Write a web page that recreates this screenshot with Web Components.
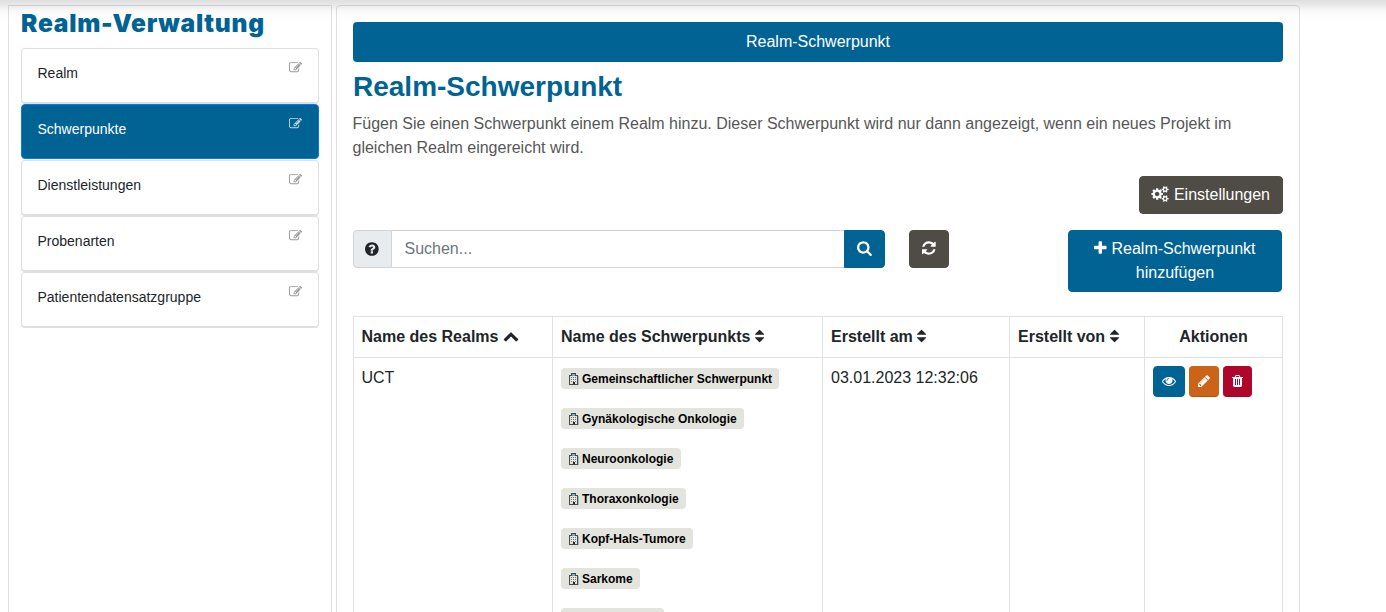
<!DOCTYPE html>
<html lang="de">
<head>
<meta charset="utf-8">
<title>Realm-Verwaltung</title>
<style>
html,body{margin:0;height:100%;overflow:hidden;background:#fff}
body{font:16px/24px "Liberation Sans",Arial,sans-serif;color:#212529}
</style>
</head>
<body>
<realm-app></realm-app>
<script>
const ICONS = {
  search:[64,1664,"M1216 832q0-185-131.5-316.5t-316.5-131.5-316.5 131.5-131.5 316.5 131.5 316.5 316.5 131.5 316.5-131.5 131.5-316.5zm512 832q0 52-38 90t-90 38q-54 0-90-38l-343-342q-179 124-399 124-143 0-273.5-55.5t-225-150-150-225-55.5-273.5 55.5-273.5 150-225 225-150 273.5-55.5 273.5 55.5 225 150 150 225 55.5 273.5q0 220-124 399l343 343q37 37 37 90z"],
  refresh:[128,1536,"M1639 1056q0 5-1 7-64 268-268 434.5t-478 166.5q-146 0-282.5-55t-243.5-157l-129 129q-19 19-45 19t-45-19-19-45v-448q0-26 19-45t45-19h448q26 0 45 19t19 45-19 45l-137 137q71 66 161 102t187 36q134 0 250-65t186-179q11-17 53-117 8-23 30-23h192q13 0 22.5 9.5t9.5 22.5zm25-800v448q0 26-19 45t-45 19h-448q-26 0-45-19t-19-45 19-45l138-138q-148-137-349-137-134 0-250 65t-186 179q-11 17-53 117-8 23-30 23h-199q-13 0-22.5-9.5t-9.5-22.5v-7q65-268 270-434.5t480-166.5q146 0 284 55.5t245 156.5l130-129q19-19 45-19t45 19 19 45z"],
  plus:[192,1408,"M1600 736v192q0 40-28 68t-68 28h-416v416q0 40-28 68t-68 28h-192q-40 0-68-28t-28-68v-416h-416q-40 0-68-28t-28-68v-192q0-40 28-68t68-28h416v-416q0-40 28-68t68-28h192q40 0 68 28t28 68v416h416q40 0 68 28t28 68z"],
  help:[128,1536,"M1024 1376v-192q0-14-9-23t-23-9h-192q-14 0-23 9t-9 23v192q0 14 9 23t23 9h192q14 0 23-9t9-23zm256-672q0-88-55.5-163t-138.5-116-170-41q-243 0-371 213-15 24 8 42l132 100q7 6 19 6 16 0 25-12 53-68 86-92 34-24 86-24 48 0 85.5 26t37.5 59q0 38-20 61t-68 45q-63 28-115.5 86.5t-52.5 125.5v36q0 14 9 23t23 9h192q14 0 23-9t9-23q0-19 21.5-49.5t54.5-49.5q32-18 49-28.5t46-35 44.5-48 28-60.5 12.5-81zm384 192q0 209-103 385.5t-279.5 279.5-385.5 103-385.5-103-279.5-279.5-103-385.5 103-385.5 279.5-279.5 385.5-103 385.5 103 279.5 279.5 103 385.5z"],
  eye:[0,1792,"M1664 960q-152-236-381-353 61 104 61 225 0 185-131.5 316.5t-316.5 131.5-316.5-131.5-131.5-316.5q0-121 61-225-229 117-381 353 133 205 333.5 326.5t434.5 121.5 434.5-121.5 333.5-326.5zm-720-384q0-20-14-34t-34-14q-125 0-214.5 89.5t-89.5 214.5q0 20 14 34t34 14 34-14 14-34q0-86 61-147t147-61q20 0 34-14t14-34zm848 384q0 34-20 69-140 230-376.5 368.5t-499.5 138.5-499.5-139-376.5-368q-20-35-20-69t20-69q140-229 376.5-368t499.5-139 499.5 139 376.5 368q20 35 20 69z"],
  pencil:[128,1536,"M491 1536l91-91-235-235-91 91v107h128v128h107zm523-928q0-22-22-22-10 0-17 7l-542 542q-7 7-7 17 0 22 22 22 10 0 17-7l542-542q7-7 7-17zm-54-192l416 416-832 832h-416v-416zm683 96q0 53-37 90l-166 166-416-416 166-165q36-38 90-38 53 0 91 38l235 234q37 39 37 91z"],
  trash:[192,1408,"M704 1376v-704q0-14-9-23t-23-9h-64q-14 0-23 9t-9 23v704q0 14 9 23t23 9h64q14 0 23-9t9-23zm256 0v-704q0-14-9-23t-23-9h-64q-14 0-23 9t-9 23v704q0 14 9 23t23 9h64q14 0 23-9t9-23zm256 0v-704q0-14-9-23t-23-9h-64q-14 0-23 9t-9 23v704q0 14 9 23t23 9h64q14 0 23-9t9-23zm-544-992h448l-48-117q-7-9-17-11h-317q-10 2-17 11zm928 32v64q0 14-9 23t-23 9h-96v948q0 83-47 143.5t-113 60.5h-832q-66 0-113-58.5t-47-141.5v-952h-96q-14 0-23-9t-9-23v-64q0-14 9-23t23-9h309l70-167q15-37 54-63t79-26h320q40 0 79 26t54 63l70 167h309q14 0 23 9t9 23z"],
  edit:[0,1792,"M888 1184l116-116-152-152-116 116v56h96v96h56zm440-720q-16-16-33 1l-350 350q-17 17-1 33t33-1l350-350q17-17 1-33zm80 594v190q0 119-84.5 203.5t-203.5 84.5h-832q-119 0-203.5-84.5t-84.5-203.5v-832q0-119 84.5-203.5t203.5-84.5h832q63 0 117 25 15 7 18 23 3 17-9 29l-49 49q-14 14-32 8-23-6-45-6h-832q-66 0-113 47t-47 113v832q0 66 47 113t113 47h832q66 0 113-47t47-113v-126q0-13 9-22l64-64q15-15 35-7t20 29zm-96-738l288 288-672 672h-288v-288zm444 132l-92 92-288-288 92-92q28-28 68-28t68 28l152 152q28 28 28 68t-28 68z"],
  cogs:[0,1920,"M832 896q0-106-75-181t-181-75-181 75-75 181 75 181 181 75 181-75 75-181zm768 512q0-52-38-90t-90-38-90 38-38 90q0 53 37.5 90.5t90.5 37.5 90.5-37.5 37.5-90.5zm0-1024q0-52-38-90t-90-38-90 38-38 90q0 53 37.5 90.5t90.5 37.5 90.5-37.5 37.5-90.5zm-384 421v185q0 10-7 19.5t-16 10.5l-155 24q-11 35-32 76 34 48 90 115 7 11 7 20 0 12-7 19-23 30-82.5 89.5t-78.5 59.5q-11 0-21-7l-115-90q-37 19-77 31-11 108-23 155-7 24-30 24h-186q-11 0-20-7.5t-10-17.5l-23-153q-34-10-75-31l-118 89q-7 7-20 7-11 0-21-8-144-133-144-160 0-9 7-19 10-14 41-53t47-61q-23-44-35-82l-152-24q-10-1-17-9.5t-7-19.5v-185q0-10 7-19.5t16-10.5l155-24q11-35 32-76-34-48-90-115-7-11-7-20 0-12 7-20 22-30 82-89t79-59q11 0 21 7l115 90q34-18 77-32 11-108 23-154 7-24 30-24h186q11 0 20 7.5t10 17.5l23 153q34 10 75 31l118-89q8-7 20-7 11 0 21 8 144 133 144 160 0 8-7 19-12 16-42 54t-45 60q23 48 34 82l152 23q10 2 17 10.5t7 19.5zm640 533v140q0 16-149 31-12 27-30 52 51 113 51 138 0 4-4 7-122 71-124 71-8 0-46-47t-52-68q-20 2-30 2t-30-2q-14 21-52 68t-46 47q-2 0-124-71-4-3-4-7 0-25 51-138-18-25-30-52-149-15-149-31v-140q0-16 149-31 13-29 30-52-51-113-51-138 0-4 4-7 4-2 35-20t59-34 30-16q8 0 46 46.5t52 67.5q20-2 30-2t30 2q51-71 92-112l6-2q4 0 124 70 4 3 4 7 0 25-51 138 17 23 30 52 149 15 149 31zm0-1024v140q0 16-149 31-12 27-30 52 51 113 51 138 0 4-4 7-122 71-124 71-8 0-46-47t-52-68q-20 2-30 2t-30-2q-14 21-52 68t-46 47q-2 0-124-71-4-3-4-7 0-25 51-138-18-25-30-52-149-15-149-31v-140q0-16 149-31 13-29 30-52-51-113-51-138 0-4 4-7 4-2 35-20t59-34 30-16q8 0 46 46.5t52 67.5q20-2 30-2t30 2q51-71 92-112l6-2q4 0 124 70 4 3 4 7 0 25-51 138 17 23 30 52 149 15 149 31z"],
  sort:[0,1024,"M1024 1088q0 26-19 45l-448 448q-19 19-45 19t-45-19l-448-448q-19-19-19-45t19-45 45-19h896q26 0 45 19t19 45zM1024 704q0 26-19 45t-45 19H64q-26 0-45-19T0 704t19-45l448-448q19-19 45-19t45 19l448 448q19 19 19 45z"],
  up:[0,1792,"M1683 1331l-166 165q-19 19-45 19t-45-19l-531-531-531 531q-19 19-45 19t-45-19l-166-165q-19-19-19-45.500t19-45.500l742-741q19-19 45-19t45 19l742 741q19 19 19 45.500t-19 45.500z"]
};
const define = (name, html, setup) => {
  const tpl = document.createElement('template');
  tpl.innerHTML = html;
  customElements.define(name, class extends HTMLElement {
    constructor(){ super(); this.attachShadow({mode:'open'}).append(tpl.content.cloneNode(true)); }
    connectedCallback(){ if (setup) setup(this, this.shadowRoot); }
  });
};

define('fa-icon', `<style>:host{display:inline}svg{height:1em;fill:currentColor;vertical-align:-.143em;overflow:visible}</style><svg aria-hidden="true"><path fill-rule="evenodd"/></svg>`, (el, r) => {
  const [x, w, d] = ICONS[el.getAttribute('name')];
  const svg = r.querySelector('svg');
  svg.setAttribute('viewBox', `${x} 0 ${w} 1792`);
  svg.style.width = w / 1792 + 'em';
  r.querySelector('path').setAttribute('d', d);
});

define('nav-card', `<style>
:host{display:flex;justify-content:space-between;box-sizing:border-box;height:56px;padding:14px 16px 0 15.5px;border:1px solid #dfdfdf;border-bottom-width:2px;border-radius:4px;font-size:14px;line-height:21px}
:host([active]){height:55px;margin-bottom:1px;background:#006394;border:1px solid #007bff;color:#fff}
fa-icon{font-size:13px;line-height:16px;margin-top:-2.500px;color:#999}
:host([active]) fa-icon{color:#c4d8e3}
</style><slot></slot><fa-icon name="edit"></fa-icon>`);

define('side-panel', `<style>
:host{display:block;box-sizing:border-box;width:324px;border:1px solid #dee0e2;padding:0 12px}
h1{margin:0 0 7px;font:900 24.500px/35px Inter,"Liberation Sans",sans-serif;color:#006394;letter-spacing:.78px;white-space:nowrap}
</style><h1>Realm-Verwaltung</h1><slot></slot>`);

define('app-button', `<style>
:host{display:block;box-sizing:border-box;padding:6px 12px;border:1px solid #006394;border-radius:4px;background:#006394;color:#fff;text-align:center}
:host([kind=dark]){background:#4f4b45;border-color:#4f4b45}
:host([kind=orange]){background:#cb6418;border-color:#cb6418 #cb6418 #b0510d}
:host([kind=red]){background:#b1062c;border-color:#b1062c #b1062c #9d0826}
:host([size=sm]){padding:4px 8px;font-size:14px;line-height:21px}
</style><slot></slot>`);

define('search-group', `<style>
:host{display:flex;width:532px;height:38px;box-sizing:border-box}
.pre{box-sizing:border-box;width:39px;padding:2px 1px 0 0;border:1px solid #ced4da;border-radius:4px 0 0 4px;background:#e9ecef;display:grid;place-items:center}
.in{flex:1;border:solid #ced4da;border-width:1px 0;padding:6px 12.500px 4px;color:#6c757d}
app-button{border-radius:0 4px 4px 0}
</style><div class="pre"><fa-icon name="help"></fa-icon></div><div class="in">Suchen...</div><app-button><fa-icon name="search"></fa-icon></app-button>`);

define('building-icon', `<style>:host{display:block;width:11px;height:13px}svg{display:block}</style>
<svg width="11" height="13" viewBox="0 0 11 13" shape-rendering="crispEdges" aria-hidden="true">
<path fill="#4a4a4a" d="M3 0h5v2h2v10H1V2h2zM4 1v2H2v8h3v-2h2v2h2V3H7V1z" fill-rule="evenodd"/>
<path fill="#7fa3b8" d="M4 1h3v2H4z"/><path fill="#9dbdd0" d="M10 3h1v9h-1z"/>
<path fill="#777" d="M3 4h1v1H3zM5 4h1v1H5zM7 4h1v1H7zM3 6h1v1H3zM5 6h1v1H5zM7 6h1v1H7zM3 8h1v1H3zM5 8h1v1H5zM7 8h1v1H7z"/>
<path fill="#222" d="M5 9h2v2H5z"/></svg>`);

define('focus-badge', `<style>
:host{display:flex;align-items:center;box-sizing:border-box;width:max-content;height:21px;margin-bottom:19px;padding:2px 7.300px 0 7px;border-radius:4px;background:#e4e4de;color:#000;font:bold 12px/19px "Liberation Sans",Arial,sans-serif}
building-icon{margin:0 3px 0 0}
</style><building-icon></building-icon><slot></slot>`);

define('realm-table', `<style>
:host{display:block;margin-top:24px}
table{border-collapse:collapse;table-layout:fixed;width:930px}
th,td{border:1px solid #dee2e6;padding:8px;text-align:left;vertical-align:top;white-space:nowrap}
th:first-child,td:first-child{padding-left:7.500px}
th:last-child{text-align:center}
.acts{display:flex;gap:4px}
.badges{padding-top:2px}
</style>
<table><colgroup><col style="width:199px"><col style="width:270px"><col style="width:187px"><col style="width:135px"><col style="width:138px"></colgroup>
<tr><th>Name des Realms <fa-icon name="up"></fa-icon></th><th>Name des Schwerpunkts <fa-icon name="sort"></fa-icon></th><th>Erstellt am <fa-icon name="sort"></fa-icon></th><th>Erstellt von <fa-icon name="sort"></fa-icon></th><th>Aktionen</th></tr>
<tr><td>UCT</td><td><div class="badges"><focus-badge>Gemeinschaftlicher Schwerpunkt</focus-badge><focus-badge>Gynäkologische Onkologie</focus-badge><focus-badge>Neuroonkologie</focus-badge><focus-badge>Thoraxonkologie</focus-badge><focus-badge>Kopf-Hals-Tumore</focus-badge><focus-badge>Sarkome</focus-badge><focus-badge style="width:103px"></focus-badge></div></td><td>03.01.2023 12:32:06</td><td></td>
<td><div class="acts"><app-button size="sm"><fa-icon name="eye"></fa-icon></app-button><app-button size="sm" kind="orange"><fa-icon name="pencil"></fa-icon></app-button><app-button size="sm" kind="red"><fa-icon name="trash"></fa-icon></app-button></div></td></tr></table>`);

define('main-panel', `<style>
:host{display:block;box-sizing:border-box;width:964px;border:1px solid #dee0e2;border-radius:4px;padding:16px 16px 0}
.banner{height:40px;line-height:40px;background:#006394;border-radius:4px;color:#fff;text-align:center}
h2{margin:8px 0;font-size:28px;line-height:33.600px;color:#006394}
p{margin:0 0 16px -.5px;color:#575757}
.right{display:flex;justify-content:flex-end}
.tools{display:flex;align-items:flex-start;margin-top:16px}
.refresh{margin-left:24px}
.add{width:214px;margin-left:auto;margin-right:1px}
</style>
<div class="banner">Realm-Schwerpunkt</div><h2>Realm-Schwerpunkt</h2>
<p>Fügen Sie einen Schwerpunkt einem Realm hinzu. Dieser Schwerpunkt wird nur dann angezeigt, wenn ein neues Projekt im gleichen Realm eingereicht wird.</p>
<div class="right"><app-button kind="dark"><fa-icon name="cogs"></fa-icon> Einstellungen</app-button></div>
<div class="tools"><search-group></search-group><app-button class="refresh" kind="dark"><fa-icon name="refresh"></fa-icon></app-button><app-button class="add"><fa-icon name="plus"></fa-icon> Realm-Schwerpunkt hinzufügen</app-button></div>
<realm-table></realm-table>`);

define('realm-app', `<style>
:host{display:flex;gap:4px;height:612px;overflow:hidden;box-sizing:border-box;padding:5px 0 0 8px;position:relative}
side-panel,main-panel{flex:none;height:700px}
.shade{position:absolute;inset:0 0 auto;height:22px;background:linear-gradient(rgba(0,0,0,.125),rgba(0,0,0,.085) 5px,rgba(0,0,0,.03) 10px,rgba(0,0,0,.008) 16px,transparent)}
</style>
<side-panel><nav-card>Realm</nav-card><nav-card active>Schwerpunkte</nav-card><nav-card>Dienstleistungen</nav-card><nav-card>Probenarten</nav-card><nav-card>Patientendatensatzgruppe</nav-card></side-panel>
<main-panel></main-panel><div class="shade"></div>`);
</script>
</body>
</html>
